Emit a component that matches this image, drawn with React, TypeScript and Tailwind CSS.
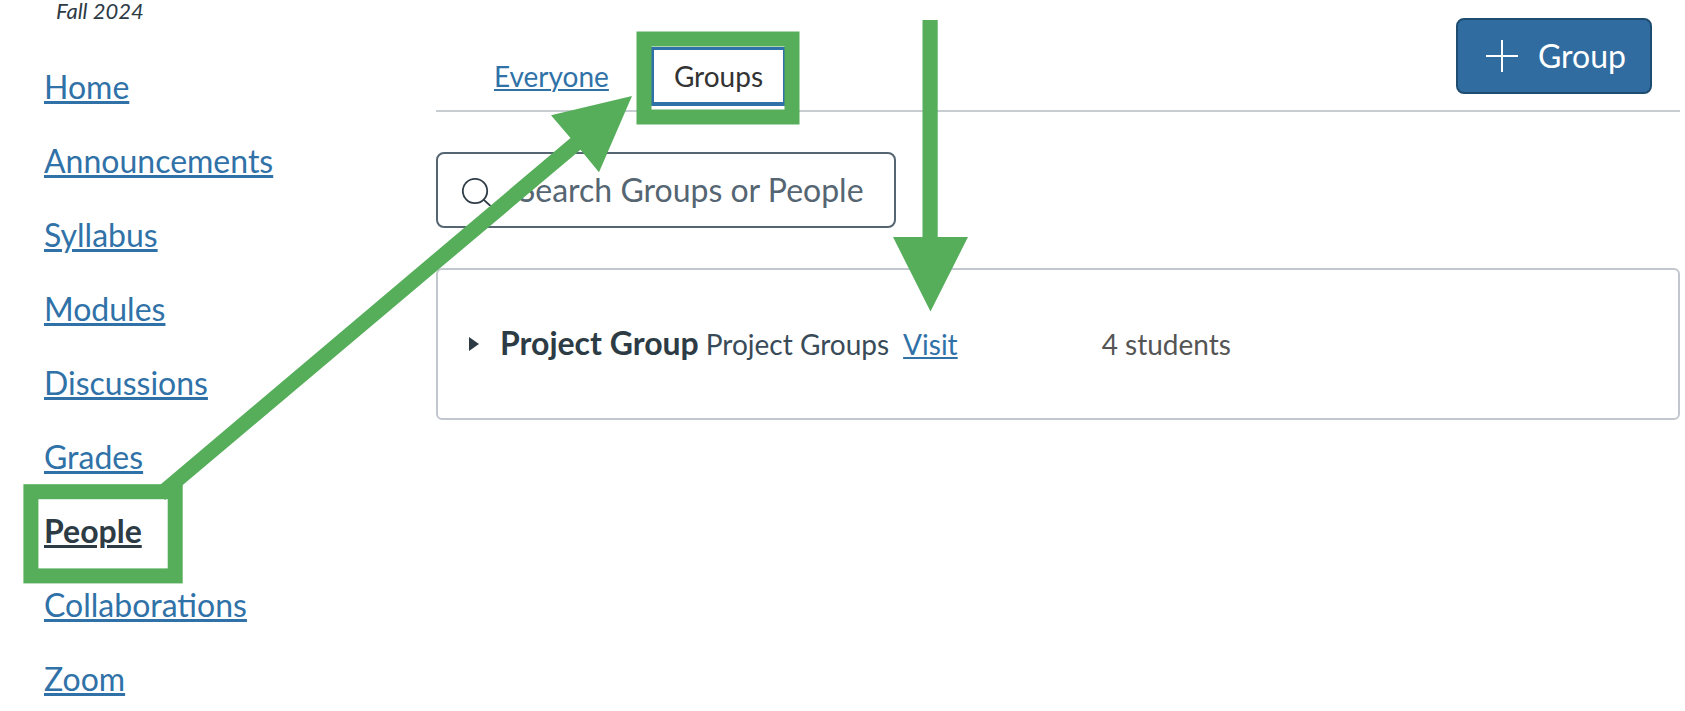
const courseLinks = [
  'Home',
  'Announcements',
  'Syllabus',
  'Modules',
  'Discussions',
  'Grades',
  'People',
  'Collaborations',
  'Zoom',
];

function CourseNav() {
  return (
    <aside className="w-[436px] shrink-0 pl-11">
      <p className="pl-3 text-[22px] italic leading-[22px] text-[#2d3b45]">Fall 2024</p>
      <nav aria-label="Course" className="mt-[46px]">
        <ul className="flex flex-col gap-9 text-[32px] leading-[38px]">
          {courseLinks.map((label) => (
            <li key={label}>
              <a
                href="#"
                aria-current={label === 'People' ? 'page' : undefined}
                className={
                  label === 'People'
                    ? 'font-bold text-[#2d3b45] underline decoration-[3px] underline-offset-2'
                    : 'text-[#3072a8] underline decoration-[3px] underline-offset-2'
                }
              >
                {label}
              </a>
            </li>
          ))}
        </ul>
      </nav>
    </aside>
  );
}

function PeopleHeader() {
  return (
    <header className="flex justify-between border-b-2 border-[#c7cdd1] pr-7 pt-[18px]">
      <nav aria-label="People views" className="flex items-end gap-[42px] pb-1 pl-[58px] text-[28px] leading-[52px]">
        <a href="#" className="mb-1 text-[#3072a8] underline decoration-2 underline-offset-2">
          Everyone
        </a>
        <a
          href="#"
          aria-current="page"
          className="border-x-[3px] border-b-4 border-t-[3px] border-[#3072a8] px-5 text-[#333333]"
        >
          Groups
        </a>
      </nav>
      <button
        type="button"
        className="mb-4 flex h-[76px] items-center gap-5 rounded-lg border-2 border-[#1f4d72] bg-[#306c9f] pl-7 pr-6 text-[32px] text-white"
      >
        <svg className="size-8" viewBox="0 0 32 32" stroke="currentColor" strokeWidth="2" aria-hidden="true">
          <path d="M16 0V32M0 16H32" />
        </svg>
        Group
      </button>
    </header>
  );
}

function SearchBox() {
  return (
    <label className="mt-10 flex h-[76px] w-[460px] items-center gap-6 rounded-lg border-2 border-[#556572] pl-6 pr-3">
      <svg
        className="size-8 shrink-0 text-[#2d3b45]"
        viewBox="0 0 32 32"
        fill="none"
        stroke="currentColor"
        strokeWidth="1.8"
        aria-hidden="true"
      >
        <circle cx="13" cy="17" r="12.2" />
        <path d="M21.6 25.6L28.5 32" />
      </svg>
      <input
        type="text"
        role="searchbox"
        aria-label="Search Groups or People"
        placeholder="Search Groups or People"
        className="w-full min-w-0 bg-transparent text-[32px] leading-[38px] outline-none placeholder:text-[#556572]"
      />
    </label>
  );
}

function GroupRow() {
  return (
    <section className="mt-10 flex h-[152px] items-center rounded-md border-2 border-[#c2c7cd] pl-[31px] text-[28px]">
      <button type="button" className="flex items-baseline text-[#2d3b45]">
        <svg className="h-[14px] w-[10px] self-center" viewBox="0 0 10 14" fill="currentColor" aria-hidden="true">
          <path d="M0 0L10 7L0 14Z" />
        </svg>
        <span className="ml-[21px] text-[32px] font-bold leading-[38px]">Project Group</span>
        <span className="ml-[7px] text-[#394b58]">Project Groups</span>
      </button>
      <a href="#" className="ml-[14px] text-[#3072a8] underline decoration-2 underline-offset-2">
        Visit
      </a>
      <span className="ml-36 text-[#555555]">4 students</span>
    </section>
  );
}

/* Step markers drawn over the page: boxes around People and Groups, arrows to Groups and Visit. */
function Guide() {
  return (
    <svg
      className="pointer-events-none absolute left-0 top-0 h-[711px] w-[970px]"
      viewBox="0 0 970 711"
      fill="#56ae5a"
      aria-hidden="true"
    >
      <rect x="30.9" y="491.7" width="144.3" height="84.2" fill="none" stroke="#56ae5a" strokeWidth="15" />
      <rect x="644" y="39" width="148" height="78" fill="none" stroke="#56ae5a" strokeWidth="15" />
      <path d="M922.5 20H937.7V237H968L930.5 311.5L893 237H922.5Z" />
      <path d="M632 96L599 172.3L580.5 149.7L165 500L155.5 488.7L570.5 138L551 115.3Z" />
    </svg>
  );
}

export default function App() {
  return (
    <div className="relative flex min-h-screen bg-white font-['Lato',sans-serif]">
      <CourseNav />
      <main className="min-w-0 flex-1 pr-[5px]">
        <PeopleHeader />
        <SearchBox />
        <GroupRow />
      </main>
      <Guide />
    </div>
  );
}
